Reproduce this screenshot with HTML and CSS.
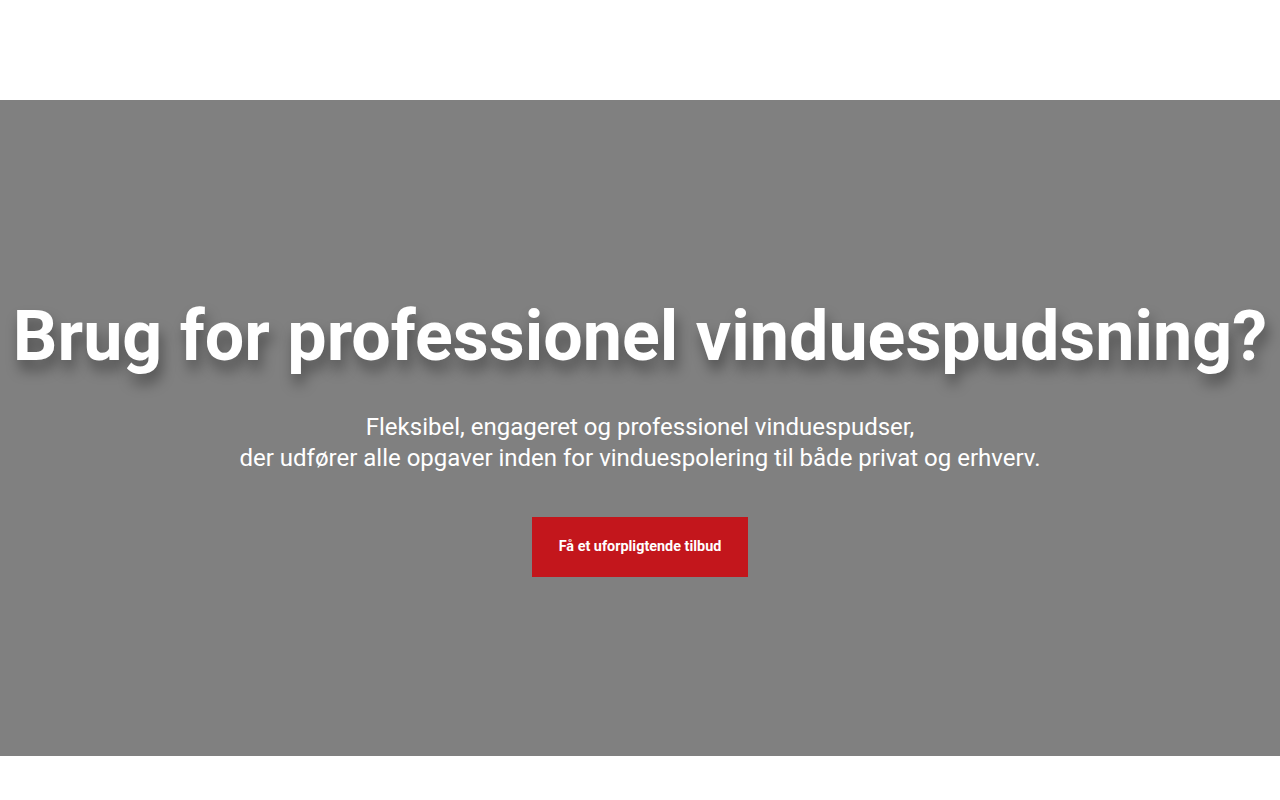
FILE: index.html
```html
<!DOCTYPE html>
<html lang="da">
<head>
    <meta charset="UTF-8">
    <meta name="viewport" content="width=device-width, initial-scale=1.0">
    <title>Vinduespudsning</title>
    <link rel="stylesheet" href="styles.css">
</head>
<body>
    <header class="top-bar"></header>

    <section class="hero">
        <h1 class="hero-title">Brug for professionel vinduespudsning?</h1>
        <p class="hero-text">
            Fleksibel, engageret og professionel vinduespudser,<br>
            der udfører alle opgaver inden for vinduespolering til både privat og erhverv.
        </p>
        <a class="hero-button" href="#tilbud">Få et uforpligtende tilbud</a>
    </section>

    <div class="after-hero"></div>
</body>
</html>
```

FILE: styles.css
```css
/* Page layout */
body {
    font-family: Roboto, "Noto Sans", Arial, sans-serif;
    background-color: #ffffff;
    margin: 0;
    padding: 0;
}

.top-bar {
    height: 100px;
    background-color: #ffffff;
}

.hero {
    height: 656px;
    background-color: #808080;
    color: #ffffff;
    display: flex;
    flex-direction: column;
    align-items: center;
    justify-content: center;
    text-align: center;
    padding-top: 14px;
    box-sizing: border-box;
}

.hero-title {
    font-size: 70px;
    font-weight: 700;
    line-height: 1.2;
    white-space: nowrap;
    margin: 0;
    text-shadow: 3px 10px 14px rgba(0, 0, 0, 0.4);
}

.hero-text {
    font-size: 24px;
    font-weight: 400;
    line-height: 31px;
    margin: 34px 0 43px;
}

.hero-button {
    display: inline-block;
    width: 216px;
    height: 60px;
    line-height: 60px;
    background-color: #c3161c;
    color: #ffffff;
    font-size: 14.4px;
    font-weight: 700;
    text-decoration: none;
}

.after-hero {
    height: 44px;
}
```
